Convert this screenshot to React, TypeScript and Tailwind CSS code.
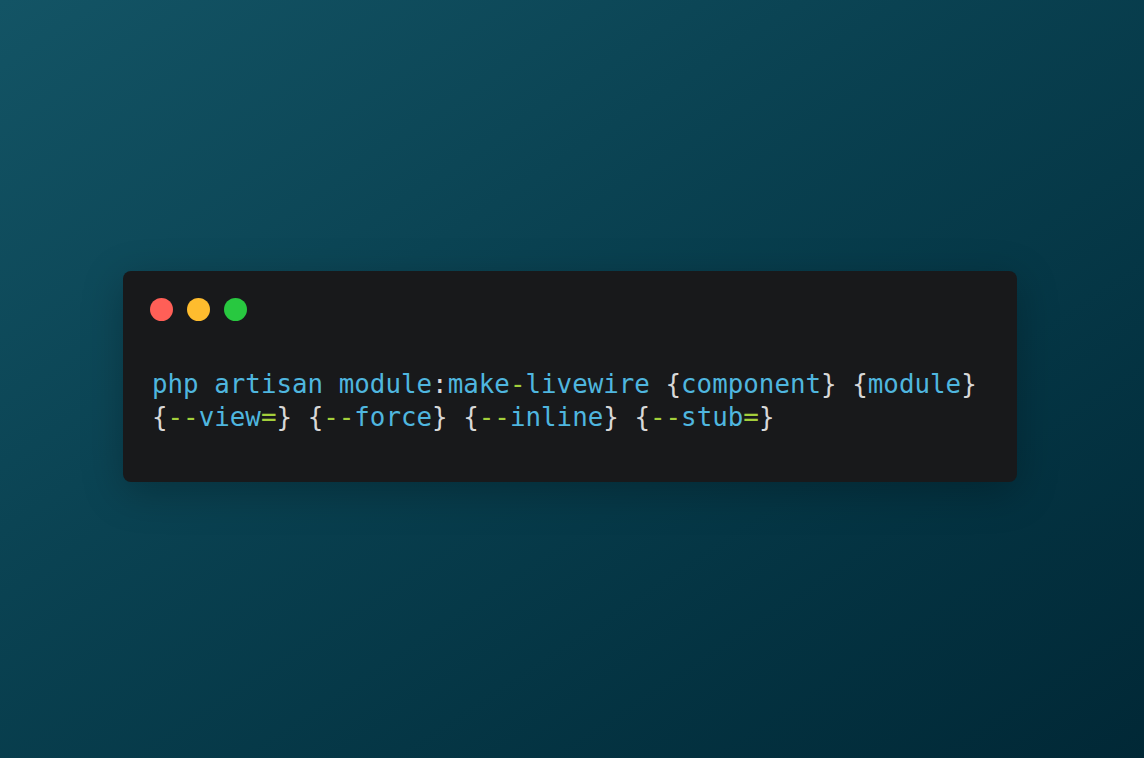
const blue = "text-[#4fb6df]";
const green = "text-[#a3cf3b]";
const plain = "text-[#d8d8d8]";

function Flag({ name, eq }: { name: string; eq?: boolean }) {
    return (
        <>
            <span className={plain}>{"{"}</span>
            <span className={green}>--</span>
            <span className={blue}>{name}</span>
            {eq && <span className={green}>=</span>}
            <span className={plain}>{"}"}</span>
        </>
    );
}

function Arg({ name }: { name: string }) {
    return (
        <>
            <span className={plain}>{"{"}</span>
            <span className={blue}>{name}</span>
            <span className={plain}>{"}"}</span>
        </>
    );
}

export default function App() {
    return (
        <div className="flex h-[758px] w-full items-center justify-center bg-gradient-to-br from-[#135465] to-[#012836]">
            <div className="mr-[4px] mb-[6px] w-[894px] rounded-lg bg-[#18191b] pt-[27px] pb-[48px] shadow-[0_10px_40px_rgba(0,0,0,0.25)]">
                <div className="flex gap-[14px] pl-[27px]">
                    <span className="h-[23px] w-[23px] rounded-full bg-[#ff5f57]" />
                    <span className="h-[23px] w-[23px] rounded-full bg-[#febc2e]" />
                    <span className="h-[23px] w-[23px] rounded-full bg-[#28c840]" />
                </div>
                <pre className="mt-[47px] pl-[29px] font-['DejaVu_Sans_Mono',monospace] text-[25.85px] leading-[33px]">
                    <span className={blue}>php artisan module</span>
                    <span className={plain}>:</span>
                    <span className={blue}>make</span>
                    <span className={green}>-</span>
                    <span className={blue}>livewire</span> <Arg name="component" /> <Arg name="module" />
                    {"\n"}
                    <Flag name="view" eq /> <Flag name="force" /> <Flag name="inline" /> <Flag name="stub" eq />
                </pre>
            </div>
        </div>
    );
}
